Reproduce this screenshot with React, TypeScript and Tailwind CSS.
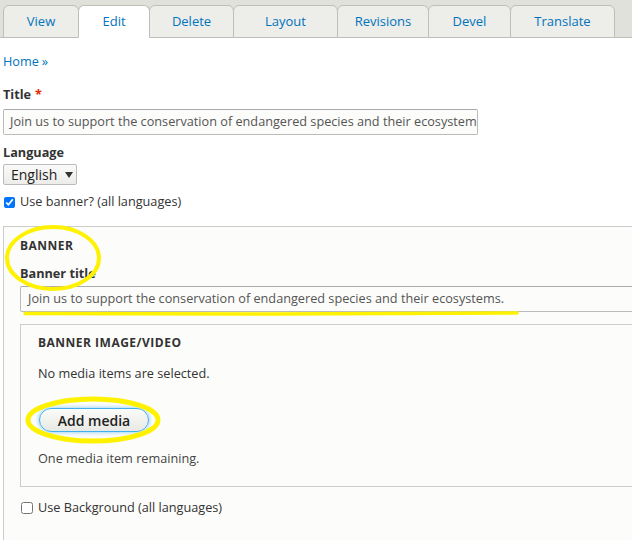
import React from "react";

const tabs = [
  { label: "View", w: 76 },
  { label: "Edit", w: 72, active: true },
  { label: "Delete", w: 85 },
  { label: "Layout", w: 105 },
  { label: "Revisions", w: 92 },
  { label: "Devel", w: 83 },
  { label: "Translate", w: 105 },
];

const TEXT = "Join us to support the conservation of endangered species and their ecosystems.";

export default function App() {
  return (
    <div
      className="relative w-[632px] h-[540px] overflow-hidden bg-white text-[#333] text-[12.7px]"
      style={{ fontFamily: '"Open Sans", "DejaVu Sans", sans-serif' }}
    >
      {/* tab bar */}
      <div className="h-[38px] bg-[#e1e1db] border-b border-[#bfbfba] flex items-end pl-[3px]">
        {tabs.map((t) => (
          <div
            key={t.label}
            style={{ width: t.w }}
            className={
              "h-[33px] -mb-px flex items-center justify-center border border-[#bfbfba] rounded-t-[6px] text-[13px] text-[#0074bd] -ml-px first:ml-0 " +
              (t.active ? "bg-white border-b-white" : "bg-[#ededea]")
            }
          >
            {t.label}
          </div>
        ))}
      </div>

      <div className="px-[3px]">
        <div className="mt-[15px] h-[18px] flex items-center text-[#0074bd]">
          Home <span className="ml-[3px] text-[#0074bd]">»</span>
        </div>

        <div className="mt-[15px] h-[18px] flex items-center font-bold text-[#333]">
          Title <span className="ml-[4px] text-[#e32700]">*</span>
        </div>
        <div className="mt-[5px] w-[475px] h-[26px] border border-[#bbb] border-t-[#aaa] bg-[#fcfcfa] rounded-[2px] flex items-center pl-[6px] pr-[4px] overflow-hidden whitespace-nowrap text-[#555]">
          {TEXT}
        </div>

        <div className="mt-[9px] h-[18px] flex items-center font-bold text-[#333]">
          Language
        </div>
        <div className="mt-[2px] w-[74px] h-[21px] border border-[#bbb] rounded-[2px] bg-gradient-to-b from-[#fafaf8] to-[#ececea] flex items-center pl-[7px] text-[14px] text-[#222]">
          English
          <span className="ml-[8px] w-0 h-0 border-l-[4.5px] border-r-[4.5px] border-t-[6px] border-l-transparent border-r-transparent border-t-[#333]" />
        </div>

        <div className="mt-[8px] h-[18px] flex items-center gap-[5px]">
          <input type="checkbox" checked readOnly className="w-[11px] h-[11px] m-0 ml-[1px] accent-[#0075ff]" />
          <span className="text-[#333]">Use banner? (all languages)</span>
        </div>

        {/* outer fieldset */}
        <div className="mt-[15px] w-[660px] h-[330px] border border-[#ccc] bg-[#fcfcfa] pl-[16px] pt-[10px]">
          <div className="h-[18px] flex items-center font-bold uppercase text-[#333] text-[12px] tracking-[0.5px]">Banner</div>
          <div className="mt-[10px] h-[18px] flex items-center font-bold text-[#333]">Banner title</div>
          <div className="mt-[3px] w-[640px] h-[26px] border border-[#bbb] border-t-[#aaa] bg-[#fcfcfa] rounded-[2px] flex items-center pl-[7px] overflow-hidden whitespace-nowrap text-[#555]">
            {TEXT}
          </div>

          {/* inner fieldset */}
          <div className="mt-[12px] w-[640px] h-[163px] border border-[#ccc] bg-[#fcfcfa] pl-[17px] pt-[9px]">
            <div className="h-[18px] flex items-center font-bold uppercase text-[#333] text-[12px] tracking-[0.5px]">
              Banner image/video
            </div>
            <div className="mt-[13px] h-[18px] flex items-center text-[#333]">No media items are selected.</div>
            <div className="mt-[25px] ml-[1px] w-[110px] h-[24px] rounded-full border border-[#40b0f0] bg-gradient-to-b from-[#fbfbf9] to-[#e8e8e4] shadow-[0_0_4px_#7cc8f5] flex items-center justify-center text-[14px] font-semibold text-[#222]">
              Add media
            </div>
            <div className="mt-[18px] h-[18px] flex items-center text-[#444]">One media item remaining.</div>
          </div>

          <div className="mt-[12px] h-[18px] flex items-center gap-[5px]">
            <input type="checkbox" readOnly className="w-[12px] h-[12px] m-0 ml-[1px]" />
            <span className="text-[#333]">Use Background (all languages)</span>
          </div>
        </div>
      </div>

      {/* yellow annotations */}
      <svg className="absolute left-0 top-0 pointer-events-none" width="632" height="540">
        <ellipse cx="53" cy="258" rx="46" ry="31" fill="none" stroke="#fff200" strokeWidth="4" />
        <path d="M25 313.5 L270 314 L517 313" fill="none" stroke="#fff200" strokeWidth="3.5" strokeLinecap="round" />
        <ellipse cx="93" cy="420" rx="65" ry="21" fill="none" stroke="#fff200" strokeWidth="5" />
      </svg>
    </div>
  );
}
